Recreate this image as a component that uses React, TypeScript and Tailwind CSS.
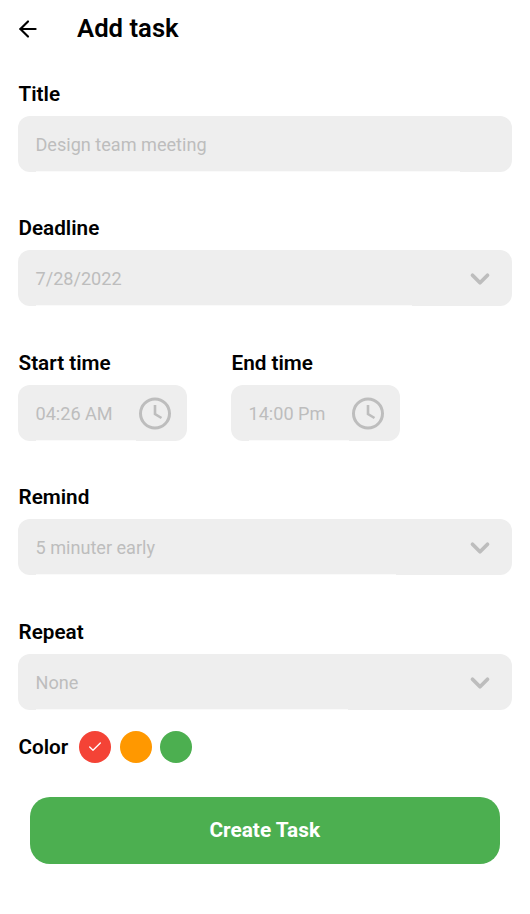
import { ArrowLeft, Check, ChevronDown } from "lucide-react";

function Clock() {
  return (
    <svg width="34" height="34" viewBox="0 0 34 34" fill="none" stroke="#bdbdbd" strokeWidth="3">
      <circle cx="17" cy="17.5" r="14.5" />
      <path d="M17 9V18L23.5 22" strokeWidth="2.6" />
    </svg>
  );
}

function Field({ text, line, icon, className }: { text: string; line: string; icon?: "down" | "clock"; className: string }) {
  return (
    <div className={`relative h-14 rounded-xl bg-[#eeeeee] pl-[17.5px] flex items-center justify-between ${className}`}>
      <span className="text-[18.1px] mt-[1px] text-[#bdbdbd]">{text}</span>
      {icon === "down" && <ChevronDown className="mr-[17px] mt-[1px] text-[#bdbdbd]" size={30} strokeWidth={3} />}
      {icon === "clock" && <span className="mr-[15px] flex"><Clock /></span>}
      <div className={`absolute left-[18px] bottom-0 h-px bg-[#fafafa] ${line}`} />
    </div>
  );
}

function Label({ children }: { children: string }) {
  return <div className="text-[20.7px] font-semibold leading-6 text-black mb-[10px] -mt-[1px] pl-[0.5px]">{children}</div>;
}

export default function App() {
  return (
    <div className="w-[530px] h-[914px] bg-white overflow-hidden px-[18px] font-['Roboto',sans-serif]">
      <div className="flex items-center h-14 pt-[1px]">
        <ArrowLeft size={26} strokeWidth={2} className="text-black mr-[36px] -ml-[3px]" />
        <h1 className="text-[25.7px] font-semibold text-black">Add task</h1>
      </div>
      <div className="mt-[27px]">
        <Label>Title</Label>
        <Field text="Design team meeting" line="w-[424px]" className="w-[494px]" />
      </div>
      <div className="mt-[45px]">
        <Label>Deadline</Label>
        <Field text="7/28/2022" line="w-[376px]" icon="down" className="w-[494px]" />
      </div>
      <div className="mt-[46px] flex gap-[44px]">
        <div>
          <Label>Start time</Label>
          <Field text="04:26 AM" line="w-[100px]" icon="clock" className="w-[169px]" />
        </div>
        <div>
          <Label>End time</Label>
          <Field text="14:00 Pm" line="w-[100px]" icon="clock" className="w-[169px]" />
        </div>
      </div>
      <div className="mt-[45px]">
        <Label>Remind</Label>
        <Field text="5 minuter early" line="w-[360px]" icon="down" className="w-[494px]" />
      </div>
      <div className="mt-[46px]">
        <Label>Repeat</Label>
        <Field text="None" line="w-[312px]" icon="down" className="w-[494px]" />
      </div>
      <div className="mt-[21px] flex items-center">
        <span className="text-[20.7px] font-semibold text-black mr-[11px] pl-[0.5px] pt-[1px]">Color</span>
        <div className="flex gap-[8.5px]">
          <div className="w-8 h-8 rounded-full bg-[#f44336] flex items-center justify-center">
            <Check size={16} strokeWidth={2} className="text-white" />
          </div>
          <div className="w-8 h-8 rounded-full bg-[#ff9800]" />
          <div className="w-8 h-8 rounded-full bg-[#4caf50]" />
        </div>
      </div>
      <div className="mt-[34px] ml-[11.5px] w-[470.5px] h-[67px] rounded-[20px] bg-[#4caf50] flex items-center justify-center">
        <span className="text-[20.8px] font-bold text-white">Create Task</span>
      </div>
    </div>
  );
}
